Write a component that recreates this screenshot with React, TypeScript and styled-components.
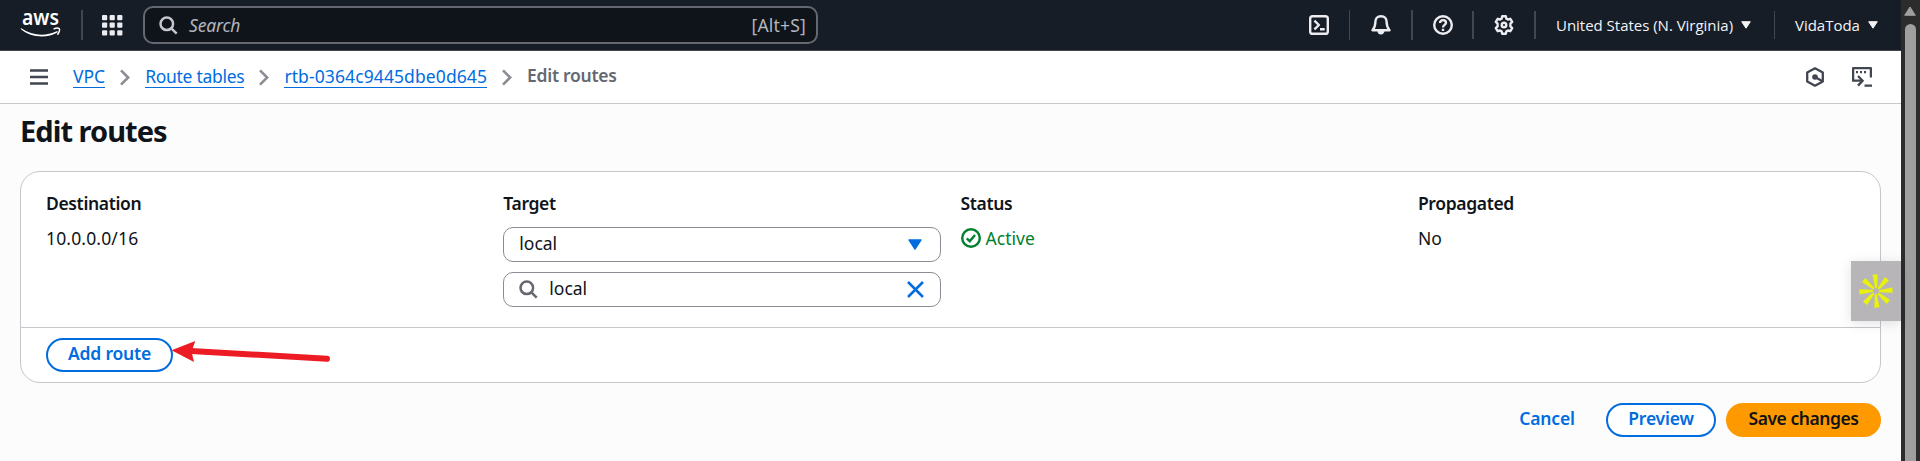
import React from "react";
import styled, { createGlobalStyle } from "styled-components";

const GlobalStyle = createGlobalStyle`
  * { box-sizing: border-box; }
  body {
    margin: 0;
    overflow: hidden;
    font-family: "Noto Sans", "Open Sans", sans-serif;
    font-size: 17.5px;
    line-height: 25px;
    color: #0f141a;
    background: #fcfcfd;
  }
  svg { display: block; flex: none; }
`;

const Screen = styled.div`
  display: flex;
  height: 461px;
`;

const Console = styled.div`
  position: relative;
  flex: 1;
  display: flex;
  flex-direction: column;
`;

const TopNav = styled.header`
  display: flex;
  align-items: center;
  height: 51px;
  padding-left: 20px;
  background: #161d26;
  border-bottom: 1px solid #424650;
  color: #f3f3f7;
`;

const Divider = styled.span<{ $thin?: boolean; $tall?: boolean }>`
  width: ${(p) => (p.$thin ? 1 : 2)}px;
  height: ${(p) => (p.$tall ? 30 : 28)}px;
  background: #424650;
`;

const AppsIcon = styled.svg`
  margin: 0 20px 0 19px;
`;

const GlobalSearch = styled.div`
  display: flex;
  align-items: center;
  width: 675px;
  height: 38px;
  padding: 0 10px 0 14px;
  border: 2px solid #656871;
  border-radius: 10px;
  background: #0f141a;
  color: #b4b4bb;
`;

const Placeholder = styled.span`
  flex: 1;
  margin-left: 11px;
  font-style: italic;
  letter-spacing: -0.15px;
`;

const Shortcut = styled.span`
  letter-spacing: 0.2px;
`;

const NavTools = styled.nav`
  display: flex;
  align-items: center;
  margin-left: auto;
`;

const NavIcon = styled.span<{ $width: number }>`
  display: flex;
  justify-content: center;
  width: ${(p) => p.$width}px;
`;

const NavMenu = styled.span<{ $width: number }>`
  display: flex;
  align-items: center;
  gap: 8px;
  width: ${(p) => p.$width}px;
  padding-left: 20px;
  font-family: "Open Sans", "Noto Sans", sans-serif;
  font-size: 15px;
  font-weight: 500;
  letter-spacing: -0.02px;
  white-space: nowrap;
`;

const CrumbBar = styled.div`
  display: flex;
  align-items: center;
  height: 53px;
  padding: 0 29px 0 30px;
  border-bottom: 1px solid #c6c6cd;
  background: #fff;
`;

const Crumbs = styled.div`
  display: flex;
  align-items: center;
  gap: 15px;
  margin-left: 25px;
`;

const CrumbLink = styled.a<{ $spacing: number }>`
  height: 23px;
  margin-top: -2px;
  line-height: 22px;
  color: #006ce0;
  border-bottom: 1px solid #006ce0;
  letter-spacing: ${(p) => p.$spacing}px;
`;

const CurrentCrumb = styled.span`
  margin-top: -3px;
  color: #656871;
  font-weight: 600;
  letter-spacing: -0.28px;
`;

const CrumbTools = styled.div`
  display: flex;
  gap: 28px;
  margin-left: auto;
`;

const Main = styled.main`
  flex: 1;
  padding: 9px 20px 0;
  background: #fcfcfd;
`;

const Title = styled.h1`
  margin: 0 0 23px;
  font-size: 29px;
  line-height: 35px;
  font-weight: 700;
  letter-spacing: -0.95px;
`;

const Card = styled.section`
  height: 212px;
  border: 1px solid #c6c6cd;
  border-radius: 20px;
  background: #fff;
`;

const RouteRow = styled.div`
  display: grid;
  grid-template-columns: repeat(4, 438px);
  column-gap: 19.3px;
  height: 155px;
  padding: 19px 0 0 25px;
`;

const Field = styled.div`
  display: flex;
  flex-direction: column;
`;

const Label = styled.div`
  margin-bottom: 11px;
  font-weight: 600;
  letter-spacing: -0.35px;
`;

const Value = styled.div<{ $success?: boolean }>`
  display: flex;
  align-items: center;
  gap: 5px;
  line-height: 22px;
  letter-spacing: ${(p) => (p.$success ? 0 : 0.15)}px;
  color: ${(p) => (p.$success ? "#00802f" : "#0f141a")};
`;

const Control = styled.div`
  display: flex;
  align-items: center;
  height: 35px;
  margin-bottom: 10px;
  padding: 0 16px 0 15px;
  border: 1px solid #8c8c94;
  border-radius: 10px;
`;

const ControlText = styled.span<{ $inset?: number; $after?: number }>`
  flex: 1;
  margin-left: ${(p) => p.$inset ?? 0}px;
  padding-bottom: 2px;
`;

const SelectCaret = styled.span`
  margin-right: 2px;
`;

const CardFooter = styled.div`
  display: flex;
  align-items: center;
  height: 55px;
  padding-left: 25px;
  border-top: 1px solid #c6c6cd;
`;

const Button = styled.button<{ $kind: "normal" | "primary" | "link"; $width: number }>`
  width: ${(p) => p.$width}px;
  height: 34px;
  padding: 0 0 3px;
  border: 2px solid
    ${(p) => (p.$kind === "normal" ? "#006ce0" : p.$kind === "primary" ? "#ff9900" : "transparent")};
  border-radius: 20px;
  background: ${(p) => (p.$kind === "normal" ? "#fff" : p.$kind === "primary" ? "#ff9900" : "transparent")};
  color: ${(p) => (p.$kind === "primary" ? "#0f141a" : "#006ce0")};
  font: 600 17.5px/25px "Noto Sans", sans-serif;
  letter-spacing: ${(p) => (p.$kind === "primary" ? -0.45 : -0.2)}px;
  white-space: nowrap;
`;

const Actions = styled.div`
  display: flex;
  justify-content: flex-end;
  gap: 10px;
  margin-top: 20px;
`;

const HelperTab = styled.div`
  position: absolute;
  top: 261px;
  right: 0;
  display: grid;
  place-items: center;
  width: 50px;
  height: 60px;
  background: #b8b5b8;
  box-shadow: 0 2px 12px rgba(0, 0, 0, 0.12);
`;

const Pointer = styled.svg`
  position: absolute;
  left: 170px;
  top: 338px;
`;

const Scrollbar = styled.aside`
  display: flex;
  flex-direction: column;
  align-items: center;
  width: 19px;
  padding: 6px 1px 0 0;
  background: #2c2c2c;
`;

const Thumb = styled.div`
  flex: 1;
  width: 11px;
  margin-top: 8px;
  border-radius: 6px 6px 0 0;
  background: #9f9f9f;
`;

const AwsLogo = () => (
  <svg width="61" height="50" viewBox="20 0 61 50" fill="none">
    <text x="22" y="25.3" fill="#fff" fontFamily="Noto Sans, sans-serif" fontSize="21" fontWeight="600" textLength="37" lengthAdjust="spacingAndGlyphs">
      aws
    </text>
    <path d="M21.3 28.3c10 7 23.500 8.600 35.400 3 .8-.4 1.500.5.7 1.200C46.800 38.600 31 37.600 21 29.200c-.6-.6-.2-1.200.3-.9z" fill="#fff" />
    <path d="M53.600 29.200c2-1.200 4.800-1.200 5.700-.6.7 1-.1 4.200-1.900 6" stroke="#fff" strokeWidth="1.500" />
  </svg>
);

const SearchIcon = ({ size, color }: { size: number; color: string }) => (
  <svg width={size} height={size} viewBox="0 0 19 19" fill="none" stroke={color} strokeWidth="2.500">
    <circle cx="7.800" cy="7.800" r="6.300" />
    <path d="M12.300 12.300l5.400 5.400" />
  </svg>
);

const Caret = ({ width, color }: { width: number; color: string }) => (
  <svg width={width} height={width * 0.8} viewBox="0 0 10 8" fill={color} stroke={color} strokeLinejoin="round">
    <path d="M.7.700h8.600L5 7.200z" />
  </svg>
);

const Chevron = () => (
  <svg width="10" height="17" viewBox="0 0 10 17" fill="none" stroke="#8c8c94" strokeWidth="2.600">
    <path d="M1 1.300l7.200 7.200L1 15.700" />
  </svg>
);

const navIcon = {
  width: 20,
  height: 20,
  viewBox: "0 0 20 20",
  fill: "none",
  stroke: "#ebebf0",
  strokeWidth: 2.4,
  strokeLinejoin: "round" as const,
};

export default function App() {
  return (
    <Screen>
      <GlobalStyle />
      <Console>
        <TopNav>
          <AwsLogo />
          <Divider $tall />
          <AppsIcon width="21" height="21" viewBox="0 0 21 21" fill="#ebebf0">
            {[0, 7.6, 15.2].map((y) =>
              [0, 7.6, 15.2].map((x) => <rect key={`${x}-${y}`} x={x} y={y} width="5.200" height="5.200" rx="1" />),
            )}
          </AppsIcon>
          <GlobalSearch>
            <SearchIcon size={19} color="#c6c6cd" />
            <Placeholder>Search</Placeholder>
            <Shortcut>[Alt+S]</Shortcut>
          </GlobalSearch>
          <NavTools>
            <NavIcon $width={60}>
              <svg {...navIcon}>
                <rect x="1.200" y="1.200" width="17.600" height="17.600" rx="2.400" />
                <path d="M5.400 5.600l4.500 4.400-4.500 4.400M11 14.300h4.700" />
              </svg>
            </NavIcon>
            <Divider $thin $tall />
            <NavIcon $width={61}>
              <svg {...navIcon}>
                <path d="M10 1.200c-3.700 0-5.600 2.600-5.600 5.600 0 4.400-.8 6-2.900 8.400h17c-2.100-2.400-2.900-4-2.900-8.400 0-3-1.900-5.600-5.600-5.600z" />
                <path d="M7.600 15.600a2.400 2.700 0 0 0 4.800 0" fill="#ebebf0" />
              </svg>
            </NavIcon>
            <Divider $tall />
            <NavIcon $width={59}>
              <svg {...navIcon}>
                <circle cx="10" cy="10" r="8.800" />
                <path d="M7 8c0-1.800 1.300-2.900 3-2.900s3 1.100 3 2.700c0 2-3 2.200-3 4.600M10 13.700v2.200" />
              </svg>
            </NavIcon>
            <Divider />
            <NavIcon $width={60}>
              <svg {...navIcon}>
                <path d="M8.200 1.200h3.600l.6 2.400 1.500.9 2.400-.7 1.900 3.100-1.800 1.800v2.600l1.800 1.800-1.900 3.100-2.400-.7-1.500.9-.6 2.400H8.200l-.6-2.400-1.500-.9-2.400.7-1.900-3.100 1.800-1.800V8.700L1.800 6.900l1.900-3.100 2.400.7 1.500-.9z" />
                <circle cx="10" cy="10" r="2.300" />
              </svg>
            </NavIcon>
            <Divider />
            <NavMenu $width={238}>
              United States (N. Virginia)
              <Caret width={10} color="#f3f3f7" />
            </NavMenu>
            <Divider $thin />
            <NavMenu $width={126}>
              VidaToda
              <Caret width={10} color="#f3f3f7" />
            </NavMenu>
          </NavTools>
        </TopNav>

        <CrumbBar>
          <svg width="18" height="16" viewBox="0 0 18 16" stroke="#424650" strokeWidth="2.400">
            <path d="M0 1.500h18M0 8h18M0 14.500h18" />
          </svg>
          <Crumbs>
            <CrumbLink $spacing={0}>VPC</CrumbLink>
            <Chevron />
            <CrumbLink $spacing={-0.29}>Route tables</CrumbLink>
            <Chevron />
            <CrumbLink $spacing={0.1}>rtb-0364c9445dbe0d645</CrumbLink>
            <Chevron />
            <CurrentCrumb>Edit routes</CurrentCrumb>
          </Crumbs>
          <CrumbTools>
            <svg width="18" height="20" viewBox="0 0 18 20" fill="none" stroke="#424650" strokeWidth="2.300">
              <path d="M9 1.300l7.800 4.300v8.800L9 18.700l-7.800-4.300V5.600z" strokeLinejoin="round" />
              <circle cx="9" cy="10" r="2.800" fill="#424650" stroke="none" />
              <path d="M9 10l7.500 4.200" />
            </svg>
            <svg width="20" height="20" viewBox="0 0 20 20" fill="none" stroke="#424650" strokeWidth="2.300">
              <path d="M18.900 10.500V1.200H1.100v12.500H10" strokeLinejoin="round" />
              <path d="M6 9l4.600 4.700L6 18.600M12.500 18.700H20" />
              <path d="M4 5.200h11" strokeDasharray="2 2" />
            </svg>
          </CrumbTools>
        </CrumbBar>

        <Main>
          <Title>Edit routes</Title>
          <Card>
            <RouteRow>
              <Field>
                <Label>Destination</Label>
                <Value>10.0.0.0/16</Value>
              </Field>
              <Field>
                <Label>Target</Label>
                <Control>
                  <ControlText>local</ControlText>
                  <SelectCaret>
                    <Caret width={14} color="#006ce0" />
                  </SelectCaret>
                </Control>
                <Control>
                  <SearchIcon size={19} color="#656871" />
                  <ControlText $inset={11}>local</ControlText>
                  <svg width="17" height="17" viewBox="0 0 17 17" stroke="#006ce0" strokeWidth="2.500">
                    <path d="M1 1l15 15M16 1L1 16" />
                  </svg>
                </Control>
              </Field>
              <Field>
                <Label>Status</Label>
                <Value $success>
                  <svg width="20" height="20" viewBox="0 0 20 20" fill="none" stroke="#00802f" strokeWidth="2.400">
                    <circle cx="10" cy="10" r="8.800" />
                    <path d="M5.800 10.300l3 3 5.200-6.200" />
                  </svg>
                  Active
                </Value>
              </Field>
              <Field>
                <Label>Propagated</Label>
                <Value>No</Value>
              </Field>
            </RouteRow>
            <CardFooter>
              <Button $kind="normal" $width={127}>Add route</Button>
            </CardFooter>
          </Card>
          <Actions>
            <Button $kind="link" $width={98}>Cancel</Button>
            <Button $kind="normal" $width={110}>Preview</Button>
            <Button $kind="primary" $width={155}>Save changes</Button>
          </Actions>
        </Main>

        <Pointer width="162" height="28" viewBox="170 338 162 28">
          <path d="M191 351L327 358.800" stroke="#ed1c24" strokeWidth="6" strokeLinecap="round" />
          <path d="M171.500 350.200L195.300 341 191.500 351.500 194 362z" fill="#ed1c24" />
        </Pointer>

        <HelperTab>
          <svg width="34" height="34" viewBox="-17 -17 34 34" fill="#e9f20a">
            {Array.from({ length: 8 }, (_, i) => (
              <path key={i} d="M-3.500 -16.300L1.700 -16.700 1.200 -3.800Q.4 -1.600 -1 -3.800z" transform={`rotate(${i * 45})`} />
            ))}
          </svg>
        </HelperTab>
      </Console>
      <Scrollbar>
        <svg width="12" height="10" viewBox="0 0 12 10" fill="#9f9f9f" stroke="#9f9f9f" strokeLinejoin="round">
          <path d="M6 1l5.300 8.300H.7z" />
        </svg>
        <Thumb />
      </Scrollbar>
    </Screen>
  );
}
